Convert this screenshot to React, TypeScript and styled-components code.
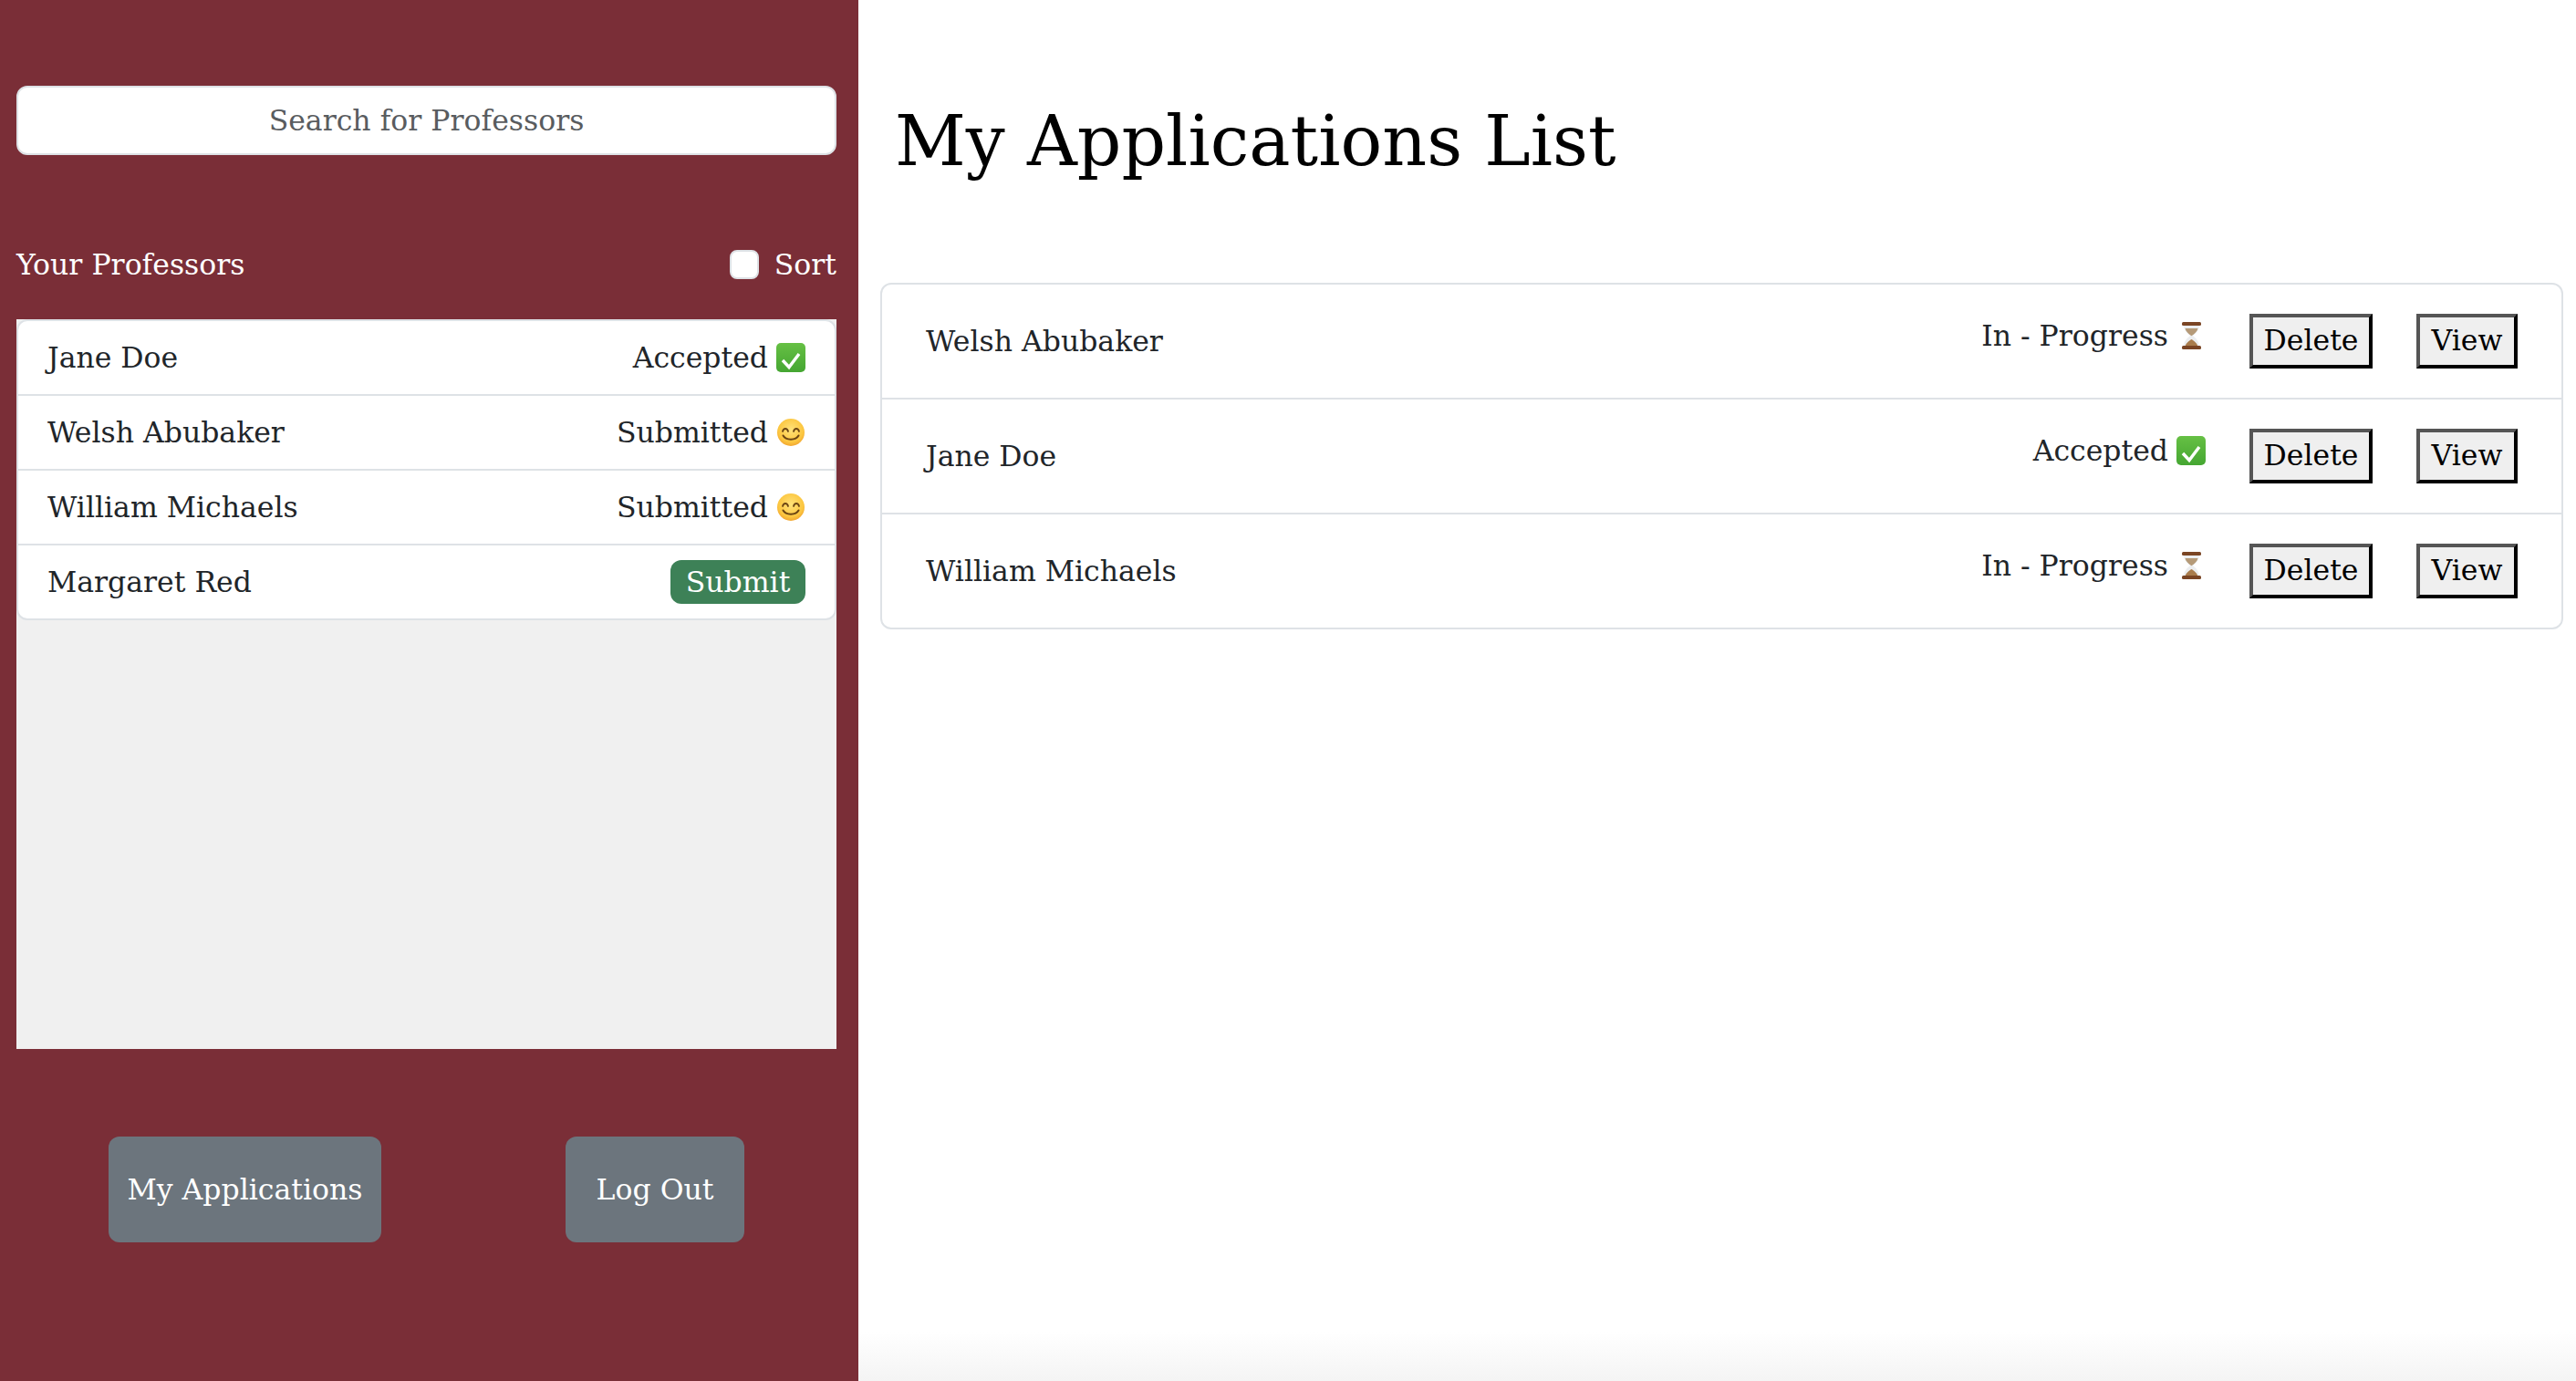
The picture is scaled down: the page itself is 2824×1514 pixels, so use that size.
import React from 'react';
import styled, { createGlobalStyle } from 'styled-components';

const GlobalStyle = createGlobalStyle`
  html, body {
    margin: 0;
    padding: 0;
    background: #fff;
  }
  * {
    box-sizing: border-box;
  }
  body {
    font-family: "DejaVu Serif", "Liberation Serif", serif;
    font-size: 31.5px;
    line-height: 48px;
    color: #212529;
  }
`;

const Page = styled.div`
  display: flex;
  width: 2824px;
  height: 1514px;
  overflow: hidden;
  background: linear-gradient(to bottom, #fff 0, #fff 1460px, #f4f4f4 1514px);
`;

const Sidebar = styled.aside`
  width: 941px;
  flex: none;
  background: #7a2e37;
  padding: 94px 24px 0 18px;
  display: flex;
  flex-direction: column;
`;

const SearchInput = styled.input`
  display: block;
  width: 100%;
  height: 76px;
  padding: 12px 24px;
  border: 2px solid #dee2e6;
  border-radius: 12px;
  background: #fff;
  font: inherit;
  text-align: center;
  color: #212529;

  &::placeholder {
    color: #595c5f;
    opacity: 1;
  }
`;

const ListHeader = styled.div`
  display: flex;
  align-items: center;
  justify-content: space-between;
  height: 48px;
  margin-top: 96px;
  color: #fff;
`;

const SortLabel = styled.label`
  display: flex;
  align-items: center;
  gap: 17px;
`;

const SortBox = styled.input`
  appearance: none;
  width: 32px;
  height: 32px;
  margin: 0;
  background: #fff;
  border: 2px solid #dee2e6;
  border-radius: 8px;
`;

const ListWell = styled.div`
  height: 800px;
  margin-top: 36px;
  background: #f0f0f0;
`;

const ProfessorList = styled.ul`
  list-style: none;
  margin: 0;
  padding: 0;
  background: #fff;
  border: 2px solid #dee2e6;
  border-radius: 12px;
`;

const ProfessorRow = styled.li`
  display: flex;
  align-items: center;
  justify-content: space-between;
  height: 82px;
  padding: 0 32px;
  border-bottom: 2px solid #dee2e6;

  &:last-child {
    height: 80px;
    border-bottom: 0;
  }
`;

const Status = styled.span`
  display: inline-flex;
  align-items: center;
  gap: 9px;
`;

const SubmitBadge = styled.button`
  width: 148px;
  height: 48px;
  padding: 0;
  border: 0;
  border-radius: 12px;
  background: #3d8157;
  color: #fff;
  font: inherit;
`;

const SideActions = styled.div`
  display: flex;
  justify-content: space-around;
  margin-top: 96px;
`;

const SideButton = styled.button<{ $width: number }>`
  width: ${({ $width }) => $width}px;
  height: 116px;
  padding: 0;
  border: 0;
  border-radius: 12px;
  background: #6c757d;
  color: #fff;
  font: inherit;
`;

const Main = styled.main`
  flex: 1;
  padding: 0 14px 0 24px;
  min-width: 0;
`;

const Title = styled.h1`
  margin: 0;
  padding: 105px 0 0 16px;
  font-size: 76px;
  line-height: 100px;
  font-weight: 400;
  color: #000;
`;

const ApplicationList = styled.ul`
  list-style: none;
  margin: 105px 0 0;
  padding: 0;
  border: 2px solid #dee2e6;
  border-radius: 12px;
`;

const ApplicationRow = styled.li`
  display: flex;
  align-items: center;
  height: 126px;
  padding: 0 48px;
  border-bottom: 2px solid #dee2e6;

  &:last-child {
    height: 124px;
    border-bottom: 0;
  }
`;

const ApplicantName = styled.span`
  flex: 1;
`;

const ApplicationStatus = styled(Status)`
  margin: 0 48px 12px 0;
`;

const OutsetButton = styled.button<{ $width: number }>`
  width: ${({ $width }) => $width}px;
  height: 60px;
  padding: 0;
  border: 4px solid #000;
  border-top-color: #555;
  border-left-color: #555;
  background: #efefef;
  color: #000;
  font: inherit;
  line-height: 1;

  & + & {
    margin-left: 48px;
  }
`;

const CheckIcon = () => (
  <svg width="32" height="32" viewBox="0 0 32 32" aria-hidden="true">
    <defs>
      <linearGradient id="checkFill" x1="0" y1="0" x2="0" y2="1">
        <stop offset="0" stopColor="#66c044" />
        <stop offset="1" stopColor="#45a632" />
      </linearGradient>
    </defs>
    <rect width="32" height="32" rx="5" fill="url(#checkFill)" />
    <path d="M7 19l7 7.500L25 12" fill="none" stroke="#fff" strokeWidth="3.400" strokeLinejoin="miter" />
  </svg>
);

const SmileIcon = () => (
  <svg width="32" height="32" viewBox="0 0 32 32" aria-hidden="true">
    <defs>
      <radialGradient id="smileFill" cx="0.5" cy="0.4" r="0.65">
        <stop offset="0" stopColor="#ffe27a" />
        <stop offset="0.7" stopColor="#fcc63f" />
        <stop offset="1" stopColor="#ee9b2d" />
      </radialGradient>
    </defs>
    <circle cx="16" cy="16" r="15" fill="url(#smileFill)" />
    <path d="M7 15c1-4 5-4 6 0M19 15c1-4 5-4 6 0" fill="none" stroke="#6b4513" strokeWidth="1.800" strokeLinecap="round" />
    <path d="M7.500 19.500c3 5.500 14 5.500 17 0" fill="none" stroke="#6b4513" strokeWidth="2" strokeLinecap="round" />
  </svg>
);

const HourglassIcon = () => (
  <svg width="32" height="32" viewBox="0 0 32 32" aria-hidden="true">
    <path d="M8 4h17c0 6-3.500 9-7 12 3.500 3 7 6 7 12H8c0-6 3.500-9 7-12-3.500-3-7-6-7-12z" fill="#eceef0" />
    <path d="M9.500 8h14c-.8 3.500-3.500 6-7 8.300C13 14 10.300 11.500 9.500 8z" fill="#b59a78" />
    <path d="M16.500 20c-2.200 1.500-6 3.500-7 8h14c-1-4.500-4.800-6.500-7-8z" fill="#a97c4c" />
    <rect x="6" y="1" width="21" height="4" rx="1.500" fill="#7a4524" />
    <rect x="6" y="27" width="21" height="4" rx="1.500" fill="#7a4524" />
  </svg>
);

const professors = [
  { name: 'Jane Doe', status: 'Accepted', icon: <CheckIcon /> },
  { name: 'Welsh Abubaker', status: 'Submitted', icon: <SmileIcon /> },
  { name: 'William Michaels', status: 'Submitted', icon: <SmileIcon /> },
  { name: 'Margaret Red' },
];

const applications = [
  { name: 'Welsh Abubaker', status: 'In - Progress', icon: <HourglassIcon /> },
  { name: 'Jane Doe', status: 'Accepted', icon: <CheckIcon /> },
  { name: 'William Michaels', status: 'In - Progress', icon: <HourglassIcon /> },
];

export default function App() {
  return (
    <Page>
      <GlobalStyle />
      <Sidebar>
        <SearchInput placeholder="Search for Professors" />
        <ListHeader>
          <span>Your Professors</span>
          <SortLabel>
            <SortBox type="checkbox" />
            Sort
          </SortLabel>
        </ListHeader>
        <ListWell>
          <ProfessorList>
            {professors.map((p) => (
              <ProfessorRow key={p.name}>
                <span>{p.name}</span>
                {p.status ? (
                  <Status>
                    {p.status}
                    {p.icon}
                  </Status>
                ) : (
                  <SubmitBadge>Submit</SubmitBadge>
                )}
              </ProfessorRow>
            ))}
          </ProfessorList>
        </ListWell>
        <SideActions>
          <SideButton $width={299}>My Applications</SideButton>
          <SideButton $width={196}>Log Out</SideButton>
        </SideActions>
      </Sidebar>
      <Main>
        <Title>My Applications List</Title>
        <ApplicationList>
          {applications.map((a) => (
            <ApplicationRow key={a.name}>
              <ApplicantName>{a.name}</ApplicantName>
              <ApplicationStatus>
                {a.status}
                {a.icon}
              </ApplicationStatus>
              <OutsetButton $width={135}>Delete</OutsetButton>
              <OutsetButton $width={111}>View</OutsetButton>
            </ApplicationRow>
          ))}
        </ApplicationList>
      </Main>
    </Page>
  );
}
